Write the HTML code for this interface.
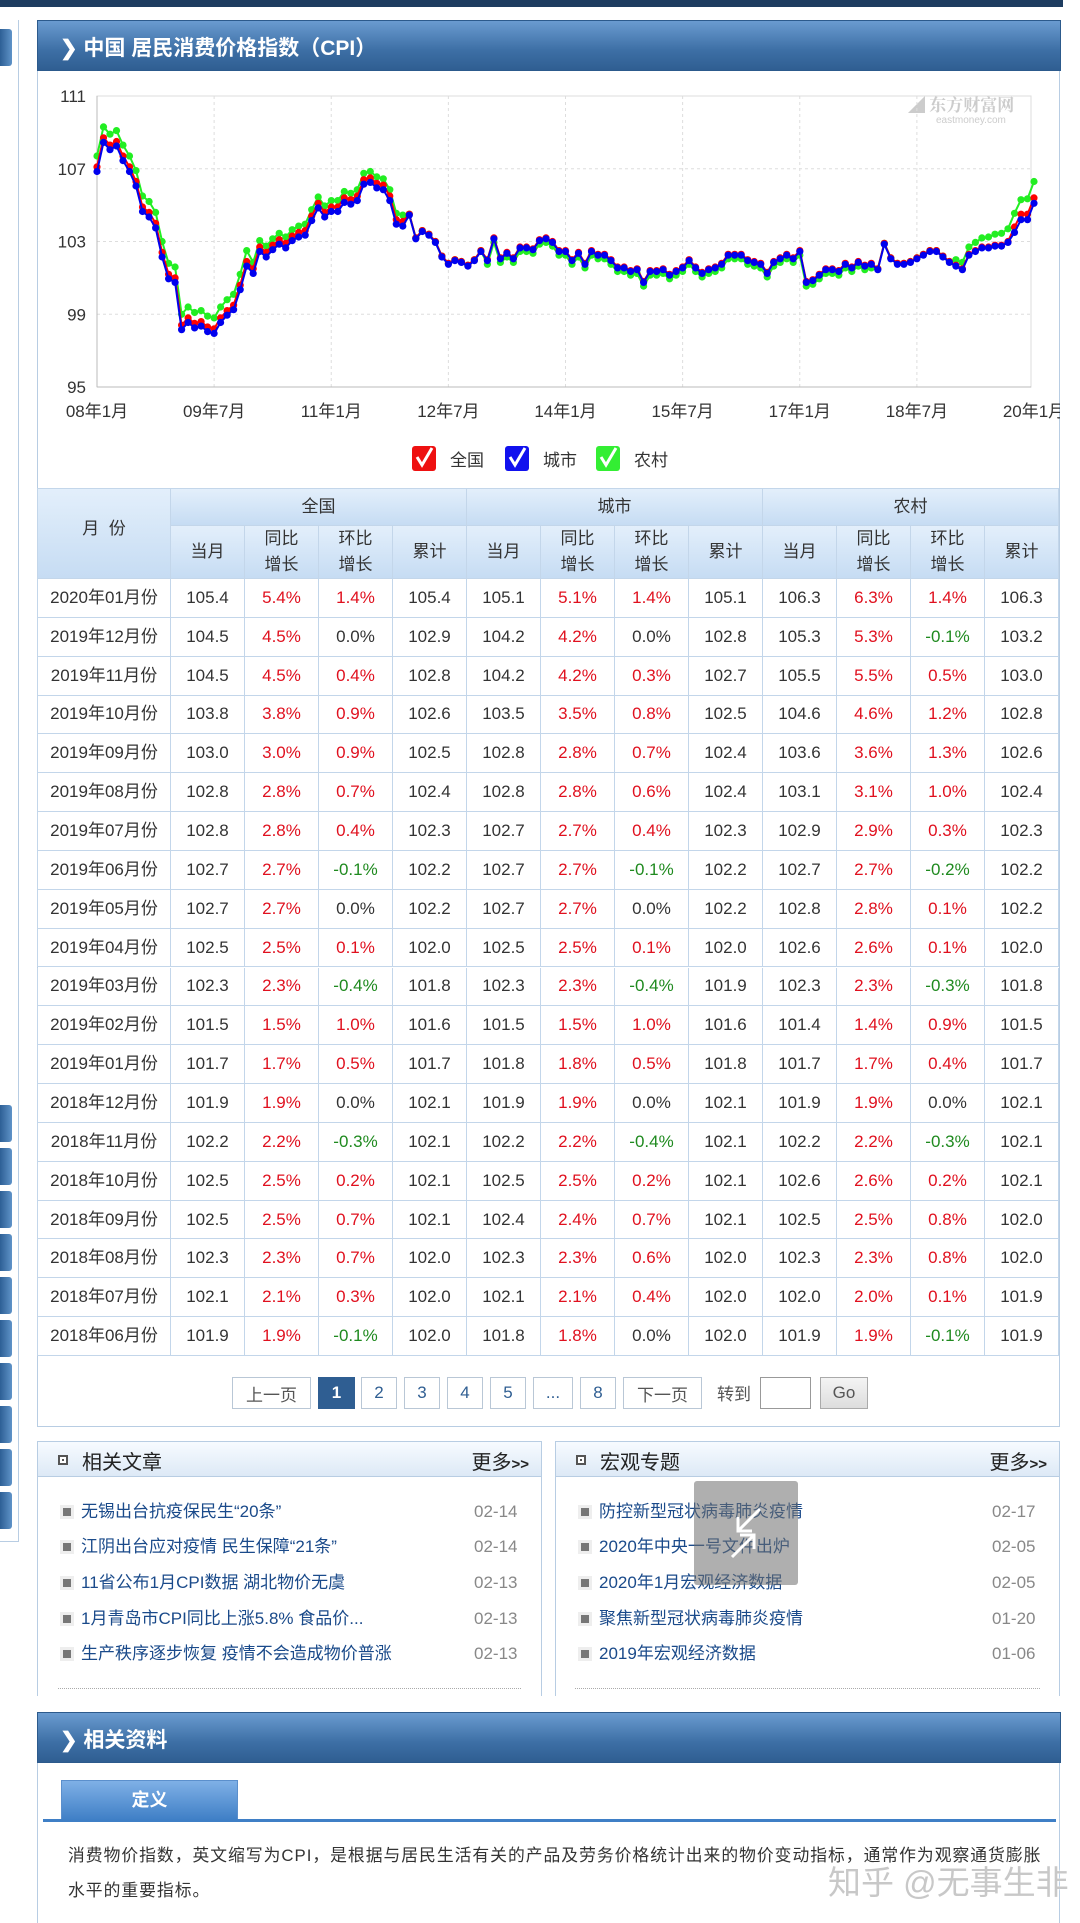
<!DOCTYPE html>
<html><head><meta charset="utf-8">
<style>
*{margin:0;padding:0;box-sizing:border-box}
body{width:1080px;height:1920px;background:#fff;font-family:"Liberation Sans","Noto Sans CJK SC",sans-serif;position:relative;overflow:hidden;color:#333}
.a{position:absolute}
.bar{background:linear-gradient(#6a9bd0,#3d6fa5 60%,#2f5e92);border:1px solid #2c5a8c;color:#fff;font-weight:bold;font-size:21px}
.sb{position:absolute;left:0;width:12px;height:37px;background:linear-gradient(90deg,#2d5f95,#5f93c8);border-radius:0 3px 3px 0}
.c{position:absolute;display:flex;align-items:center;justify-content:center;text-align:center;border-right:1px solid #c3d6ea;border-bottom:1px solid #c3d6ea;font-size:17px;line-height:26px}
.r{color:#e0101e}.g{color:#1f8a1f}
.pb{position:absolute;top:1377px;height:32px;border:1px solid #b9c7d6;background:#fff;color:#2f5e92;font-size:17px;display:flex;align-items:center;justify-content:center}
.ph{position:absolute;height:36px;background:linear-gradient(#f7fbff,#dde9f6);border:1px solid #b8cde3;font-size:20px;color:#222}
.li{position:absolute;font-size:17px;color:#1a4a8a;line-height:24px;height:24px}
.li i{position:absolute;left:-18px;top:8px;width:8px;height:8px;background:#777;box-shadow:0 0 0 3px #eee}
.dt{position:absolute;font-size:17px;color:#888;line-height:24px;height:24px}
</style></head><body>
<div class="a" style="left:0;top:0;width:1063px;height:7px;background:#1e3c60"></div>
<div class="a" style="left:0;top:20px;width:19px;height:1522px;border-right:1px solid #b8cde3;border-bottom:1px solid #b8cde3"></div>
<div class="sb" style="top:29px"></div>
<div id="sbs"></div>

<div class="a" style="left:37px;top:20px;width:1023px;height:1407px;border:1px solid #b8cde3"></div>
<div class="a bar" style="left:37px;top:20px;width:1024px;height:51px"><span class="a" style="left:22px;top:11px">❯ 中国 居民消费价格指数（CPI）</span></div>

<svg class="a" style="left:38px;top:71px" width="1022" height="415" id="ch"></svg>

<div id="tb"></div>

<div class="pb" style="left:232px;width:79px;color:#555">上一页</div>
<div class="pb" style="left:318px;width:37px;background:#2f5e92;color:#fff;border-color:#2f5e92;font-weight:bold">1</div>
<div class="pb" style="left:361px;width:36px">2</div>
<div class="pb" style="left:404px;width:36px">3</div>
<div class="pb" style="left:447px;width:36px">4</div>
<div class="pb" style="left:490px;width:36px">5</div>
<div class="pb" style="left:533px;width:40px">...</div>
<div class="pb" style="left:580px;width:36px">8</div>
<div class="pb" style="left:623px;width:79px;color:#555">下一页</div>
<div class="a" style="left:717px;top:1380px;font-size:17px;color:#555">转到</div>
<div class="pb" style="left:760px;width:51px;border-color:#999"></div>
<div class="pb" style="left:820px;width:48px;background:linear-gradient(#f4f4f4,#ddd);color:#555;border-color:#aaa">Go</div>

<div class="a" style="left:37px;top:1441px;width:505px;height:255px;border-left:1px solid #b8cde3;border-right:1px solid #b8cde3"></div>
<div class="a" style="left:555px;top:1441px;width:505px;height:255px;border-left:1px solid #b8cde3;border-right:1px solid #b8cde3"></div>
<div class="ph" style="left:37px;top:1441px;width:505px"><span class="a" style="left:20px;top:13px;width:10px;height:10px;border:2px solid #555;background:#fff;box-shadow:inset 0 0 0 2px #fff,inset 0 0 0 5px #555"></span><span class="a" style="left:44px;top:4px">相关文章</span><span class="a" style="right:12px;top:4px">更多<b style="font-size:15px">&gt;&gt;</b></span></div>
<div class="ph" style="left:555px;top:1441px;width:505px"><span class="a" style="left:20px;top:13px;width:10px;height:10px;border:2px solid #555;box-shadow:inset 0 0 0 2px #fff,inset 0 0 0 5px #555"></span><span class="a" style="left:44px;top:4px">宏观专题</span><span class="a" style="right:12px;top:4px">更多<b style="font-size:15px">&gt;&gt;</b></span></div>
<div id="lst"></div>
<div class="a" style="left:58px;top:1688px;width:463px;border-top:1px dotted #aaa"></div>
<div class="a" style="left:575px;top:1688px;width:465px;border-top:1px dotted #aaa"></div>
<div class="a" style="left:694px;top:1481px;width:104px;height:104px;background:rgba(110,110,110,0.55);border-radius:3px"><svg width="104" height="104"><path d="M66 28 L44 50 M44 36 L44 50 L58 50 M38 76 L60 54 M60 68 L60 54 L46 54" stroke="#fff" stroke-width="3" fill="none"/></svg></div>

<div class="a bar" style="left:37px;top:1712px;width:1024px;height:51px"><span class="a" style="left:22px;top:11px">❯ 相关资料</span></div>
<div class="a" style="left:37px;top:1763px;width:1023px;height:160px;border-left:1px solid #b8cde3;border-right:1px solid #b8cde3"></div>
<div class="a" style="left:61px;top:1780px;width:177px;height:40px;background:linear-gradient(#7fb0e6,#3f7fc6);border:1px solid #5b8fcc;border-bottom:none;color:#fff;font-size:18px;font-weight:bold;text-align:center;line-height:38px">定义</div>
<div class="a" style="left:43px;top:1819px;width:1013px;height:3px;background:#3f7fc6"></div>
<div class="a" style="left:68px;top:1838px;width:1000px;font-size:16.8px;letter-spacing:1px;line-height:35px;color:#333;white-space:nowrap">消费物价指数，英文缩写为CPI，是根据与居民生活有关的产品及劳务价格统计出来的物价变动指标，通常作为观察通货膨胀<br>水平的重要指标。</div>
<div class="a" style="left:828px;top:1856px;font-size:33px;color:#c8c8c8;white-space:nowrap;text-shadow:0 0 2px #fff">知乎 @无事生非</div>

<script>
var h='';for(var k=0;k<10;k++)h+='<div class="sb" style="top:'+(1105+k*43)+'px"></div>';
document.getElementById('sbs').innerHTML=h;

var nat=[107.1,108.7,108.3,108.5,107.7,107.1,106.3,104.9,104.6,104.0,102.4,101.2,
101.0,98.4,98.8,98.5,98.6,98.3,98.2,98.8,99.2,99.5,100.6,101.9,
101.5,102.7,102.4,102.8,103.1,102.9,103.3,103.5,103.6,104.4,105.1,104.6,
104.9,104.9,105.4,105.3,105.5,106.4,106.5,106.2,106.1,105.5,104.2,104.1,
104.5,103.2,103.6,103.4,103.0,102.2,101.8,102.0,101.9,101.7,102.0,102.5,
102.0,103.2,102.1,102.4,102.1,102.7,102.7,102.6,103.1,103.2,103.0,102.5,
102.5,102.0,102.4,101.8,102.5,102.3,102.3,102.0,101.6,101.6,101.4,101.5,
100.8,101.4,101.4,101.5,101.2,101.4,101.6,102.0,101.6,101.3,101.5,101.6,
101.8,102.3,102.3,102.3,102.0,101.9,101.8,101.3,101.9,102.1,102.3,102.1,
102.5,100.8,100.9,101.2,101.5,101.5,101.4,101.8,101.6,101.9,101.7,101.8,
101.5,102.9,102.1,101.8,101.8,101.9,102.1,102.3,102.5,102.5,102.2,101.9,
101.7,101.5,102.3,102.5,102.7,102.7,102.8,102.8,103.0,103.8,104.5,104.5,105.4];
function X(i){return 59+i*937/144}function Y(v){return 25+(111-v)*18.19}
var s='';
s+='<text x="870" y="40" font-size="17" fill="#ccc" font-weight="bold" font-family="Liberation Serif,Noto Serif CJK SC,serif">◢ 东方财富网</text><text x="898" y="52" font-size="10" fill="#ccc">eastmoney.com</text>';
[107,103,99].forEach(function(v){s+='<line x1="59" x2="993" y1="'+Y(v)+'" y2="'+Y(v)+'" stroke="#ddd" stroke-dasharray="3,3"/>'});
var lb=['08年1月','09年7月','11年1月','12年7月','14年1月','15年7月','17年1月','18年7月','20年1月'];
lb.forEach(function(t,k){var x=X(k*18);if(k>0&&k<8)s+='<line x1="'+x+'" x2="'+x+'" y1="25" y2="316" stroke="#ddd" stroke-dasharray="3,3"/>';s+='<text x="'+x+'" y="346" font-size="17" fill="#333" text-anchor="middle">'+t+'</text>'});
s+='<rect x="59" y="25" width="934" height="291" fill="none" stroke="#ddd"/><line x1="59" x2="59" y1="25" y2="316" stroke="#bbb"/><line x1="59" x2="993" y1="316" y2="316" stroke="#bbb"/>';
[111,107,103,99,95].forEach(function(v){s+='<text x="48" y="'+(Y(v)+6)+'" font-size="17" fill="#333" text-anchor="end">'+v+'</text>'});
function ser(f,col){var p=[],d='';nat.forEach(function(v,i){var w=f(v,i);p.push(X(i).toFixed(1)+','+Y(w).toFixed(1));d+='<circle cx="'+X(i).toFixed(1)+'" cy="'+Y(w).toFixed(1)+'" r="3.6" fill="'+col+'"/>'});return '<polyline points="'+p.join(' ')+'" fill="none" stroke="'+col+'" stroke-width="2"/>'+d}
s+=ser(function(v,i){var d=i<24?0.6:i<48?0.35:i<60?0:i<120?-0.25:i<132?0:0.3+(i-132)*0.05;return v+d},'#22ee22');
s+=ser(function(v){return v},'#ff0000');
s+=ser(function(v,i){return v-(i<48?0.25:i>140?0.3:0.05)},'#0000ee');
function cb(x,c,t){return '<rect x="'+x+'" y="375" width="24" height="25" rx="3" fill="'+c+'"/><path d="M'+(x+5)+' 386 l5 8 l10 -17" stroke="#fff" stroke-width="3" fill="none"/><text x="'+(x+38)+'" y="395" font-size="17" fill="#333">'+t+'</text>'}
s+=cb(374,'#ee1111','全国')+cb(467,'#1111ee','城市')+cb(558,'#33ee33','农村');
document.getElementById('ch').innerHTML=s;

var rows=`2020年01月份 105.4 5.4% 1.4% 105.4 105.1 5.1% 1.4% 105.1 106.3 6.3% 1.4% 106.3
2019年12月份 104.5 4.5% 0.0% 102.9 104.2 4.2% 0.0% 102.8 105.3 5.3% -0.1% 103.2
2019年11月份 104.5 4.5% 0.4% 102.8 104.2 4.2% 0.3% 102.7 105.5 5.5% 0.5% 103.0
2019年10月份 103.8 3.8% 0.9% 102.6 103.5 3.5% 0.8% 102.5 104.6 4.6% 1.2% 102.8
2019年09月份 103.0 3.0% 0.9% 102.5 102.8 2.8% 0.7% 102.4 103.6 3.6% 1.3% 102.6
2019年08月份 102.8 2.8% 0.7% 102.4 102.8 2.8% 0.6% 102.4 103.1 3.1% 1.0% 102.4
2019年07月份 102.8 2.8% 0.4% 102.3 102.7 2.7% 0.4% 102.3 102.9 2.9% 0.3% 102.3
2019年06月份 102.7 2.7% -0.1% 102.2 102.7 2.7% -0.1% 102.2 102.7 2.7% -0.2% 102.2
2019年05月份 102.7 2.7% 0.0% 102.2 102.7 2.7% 0.0% 102.2 102.8 2.8% 0.1% 102.2
2019年04月份 102.5 2.5% 0.1% 102.0 102.5 2.5% 0.1% 102.0 102.6 2.6% 0.1% 102.0
2019年03月份 102.3 2.3% -0.4% 101.8 102.3 2.3% -0.4% 101.9 102.3 2.3% -0.3% 101.8
2019年02月份 101.5 1.5% 1.0% 101.6 101.5 1.5% 1.0% 101.6 101.4 1.4% 0.9% 101.5
2019年01月份 101.7 1.7% 0.5% 101.7 101.8 1.8% 0.5% 101.8 101.7 1.7% 0.4% 101.7
2018年12月份 101.9 1.9% 0.0% 102.1 101.9 1.9% 0.0% 102.1 101.9 1.9% 0.0% 102.1
2018年11月份 102.2 2.2% -0.3% 102.1 102.2 2.2% -0.4% 102.1 102.2 2.2% -0.3% 102.1
2018年10月份 102.5 2.5% 0.2% 102.1 102.5 2.5% 0.2% 102.1 102.6 2.6% 0.2% 102.1
2018年09月份 102.5 2.5% 0.7% 102.1 102.4 2.4% 0.7% 102.1 102.5 2.5% 0.8% 102.0
2018年08月份 102.3 2.3% 0.7% 102.0 102.3 2.3% 0.6% 102.0 102.3 2.3% 0.8% 102.0
2018年07月份 102.1 2.1% 0.3% 102.0 102.1 2.1% 0.4% 102.0 102.0 2.0% 0.1% 101.9
2018年06月份 101.9 1.9% -0.1% 102.0 101.8 1.8% 0.0% 102.0 101.9 1.9% -0.1% 101.9`.split('\n');
var L=37,T=488,CW=74,C0=134,hb='background:linear-gradient(#e3effb,#c6dcf3);';
var t='';
t+='<div class="c" style="left:'+L+'px;top:'+T+'px;width:'+C0+'px;height:91px;'+hb+'border-left:1px solid #c3d6ea;border-top:1px solid #c3d6ea;padding-bottom:10px">月&nbsp;&nbsp;份</div>';
['全国','城市','农村'].forEach(function(n,g){var x=L+C0+g*CW*4;t+='<div class="c" style="left:'+x+'px;top:'+T+'px;width:'+(CW*4)+'px;height:38px;'+hb+'border-top:1px solid #c3d6ea">'+n+'</div>';
['当月','同比<br>增长','环比<br>增长','累计'].forEach(function(m,j){t+='<div class="c" style="left:'+(x+j*CW)+'px;top:'+(T+38)+'px;width:'+CW+'px;height:53px;'+hb+'">'+m+'</div>'})});
rows.forEach(function(r,i){var a=r.split(' '),y=579+i*38.85;
t+='<div class="c" style="left:'+L+'px;top:'+y+'px;width:'+C0+'px;height:38.85px;border-left:1px solid #c3d6ea">'+a[0]+'</div>';
for(var j=1;j<13;j++){var v=a[j],cl='',m=(j-1)%4;if(m==1)cl='r';if(m==2){cl=v.charAt(0)=='-'?'g':(v=='0.0%'?'':'r')}
t+='<div class="c '+cl+'" style="left:'+(L+C0+(j-1)*CW)+'px;top:'+y+'px;width:'+CW+'px;height:38.85px">'+v+'</div>'}});
document.getElementById('tb').innerHTML=t;

var A=[['无锡出台抗疫保民生“20条”','02-14'],['江阴出台应对疫情 民生保障“21条”','02-14'],['11省公布1月CPI数据 湖北物价无虞','02-13'],['1月青岛市CPI同比上涨5.8% 食品价...','02-13'],['生产秩序逐步恢复 疫情不会造成物价普涨','02-13']];
var B=[['防控新型冠状病毒肺炎疫情','02-17'],['2020年中央一号文件出炉','02-05'],['2020年1月宏观经济数据','02-05'],['聚焦新型冠状病毒肺炎疫情','01-20'],['2019年宏观经济数据','01-06']];
var ys=[1500,1535,1571,1607,1642],o='';
A.forEach(function(a,i){o+='<div class="li" style="left:81px;top:'+ys[i]+'px"><i></i>'+a[0]+'</div><div class="dt" style="left:474px;top:'+ys[i]+'px">'+a[1]+'</div>'});
B.forEach(function(a,i){o+='<div class="li" style="left:599px;top:'+ys[i]+'px"><i></i>'+a[0]+'</div><div class="dt" style="left:992px;top:'+ys[i]+'px">'+a[1]+'</div>'});
document.getElementById('lst').innerHTML=o;
</script>
</body></html>
